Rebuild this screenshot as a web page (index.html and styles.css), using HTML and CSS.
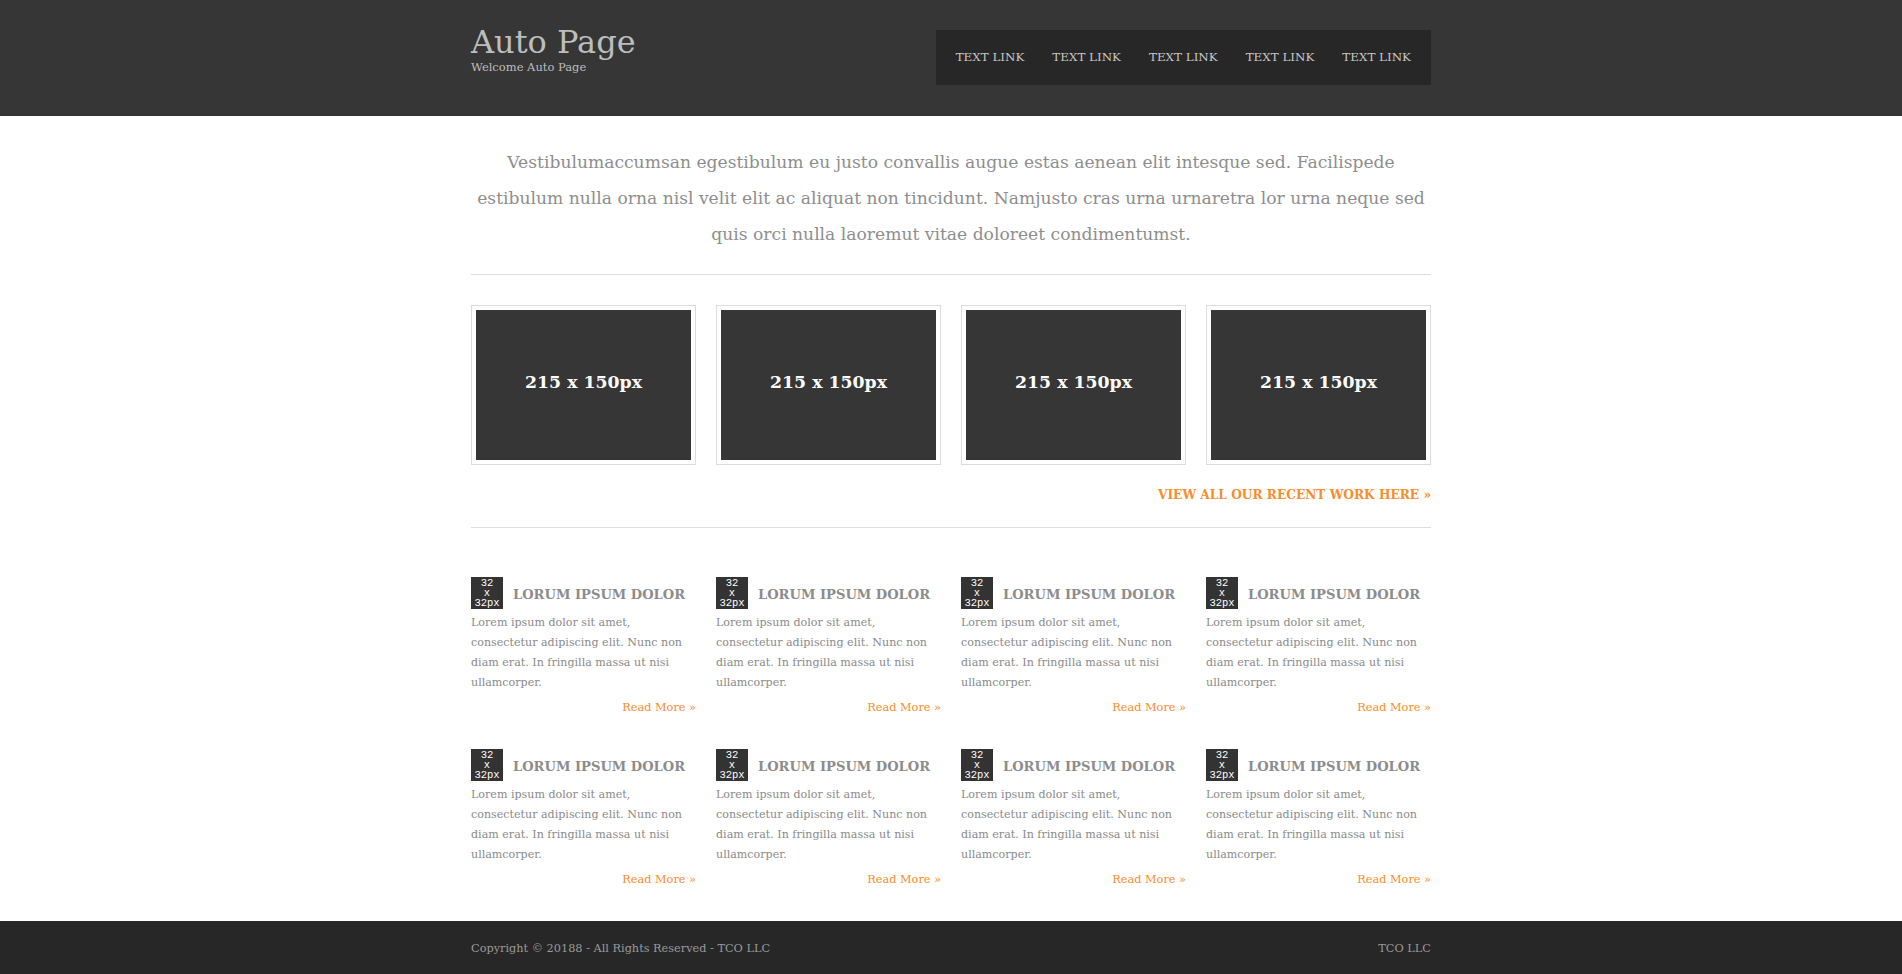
FILE: index.html
```html
<!DOCTYPE html>
<html lang="en">
<head>
<meta charset="utf-8">
<title>Auto Page</title>
<link rel="stylesheet" href="styles.css">
</head>
<body>
<header class="site-header">
  <div class="wrap header-inner">
    <div class="brand">
      <h1 class="brand-title">Auto Page</h1>
      <p class="brand-sub">Welcome Auto Page</p>
    </div>
    <nav class="nav">
      <a href="#">TEXT LINK</a>
      <a href="#">TEXT LINK</a>
      <a href="#">TEXT LINK</a>
      <a href="#">TEXT LINK</a>
      <a href="#">TEXT LINK</a>
    </nav>
  </div>
</header>

<main class="wrap main">
  <p class="intro">Vestibulumaccumsan egestibulum eu justo convallis augue estas aenean elit intesque sed. Facilispede estibulum nulla orna nisl velit elit ac aliquat non tincidunt. Namjusto cras urna urnaretra lor urna neque sed quis orci nulla laoremut vitae doloreet condimentumst.</p>
  <hr class="rule">

  <section class="works">
    <div class="work"><div class="work-img">215 x 150px</div></div>
    <div class="work"><div class="work-img">215 x 150px</div></div>
    <div class="work"><div class="work-img">215 x 150px</div></div>
    <div class="work"><div class="work-img">215 x 150px</div></div>
  </section>
  <div class="view-all"><a href="#">VIEW ALL OUR RECENT WORK HERE &raquo;</a></div>
  <hr class="rule">

  <section class="features">
    <article class="feature">
      <div class="feature-head"><span class="icon">32<br>x<br>32px</span><h3>LORUM IPSUM DOLOR</h3></div>
      <p>Lorem ipsum dolor sit amet, consectetur adipiscing elit. Nunc non diam erat. In fringilla massa ut nisi ullamcorper.</p>
      <a class="more" href="#">Read More &raquo;</a>
    </article>
    <article class="feature">
      <div class="feature-head"><span class="icon">32<br>x<br>32px</span><h3>LORUM IPSUM DOLOR</h3></div>
      <p>Lorem ipsum dolor sit amet, consectetur adipiscing elit. Nunc non diam erat. In fringilla massa ut nisi ullamcorper.</p>
      <a class="more" href="#">Read More &raquo;</a>
    </article>
    <article class="feature">
      <div class="feature-head"><span class="icon">32<br>x<br>32px</span><h3>LORUM IPSUM DOLOR</h3></div>
      <p>Lorem ipsum dolor sit amet, consectetur adipiscing elit. Nunc non diam erat. In fringilla massa ut nisi ullamcorper.</p>
      <a class="more" href="#">Read More &raquo;</a>
    </article>
    <article class="feature">
      <div class="feature-head"><span class="icon">32<br>x<br>32px</span><h3>LORUM IPSUM DOLOR</h3></div>
      <p>Lorem ipsum dolor sit amet, consectetur adipiscing elit. Nunc non diam erat. In fringilla massa ut nisi ullamcorper.</p>
      <a class="more" href="#">Read More &raquo;</a>
    </article>
    <article class="feature">
      <div class="feature-head"><span class="icon">32<br>x<br>32px</span><h3>LORUM IPSUM DOLOR</h3></div>
      <p>Lorem ipsum dolor sit amet, consectetur adipiscing elit. Nunc non diam erat. In fringilla massa ut nisi ullamcorper.</p>
      <a class="more" href="#">Read More &raquo;</a>
    </article>
    <article class="feature">
      <div class="feature-head"><span class="icon">32<br>x<br>32px</span><h3>LORUM IPSUM DOLOR</h3></div>
      <p>Lorem ipsum dolor sit amet, consectetur adipiscing elit. Nunc non diam erat. In fringilla massa ut nisi ullamcorper.</p>
      <a class="more" href="#">Read More &raquo;</a>
    </article>
    <article class="feature">
      <div class="feature-head"><span class="icon">32<br>x<br>32px</span><h3>LORUM IPSUM DOLOR</h3></div>
      <p>Lorem ipsum dolor sit amet, consectetur adipiscing elit. Nunc non diam erat. In fringilla massa ut nisi ullamcorper.</p>
      <a class="more" href="#">Read More &raquo;</a>
    </article>
    <article class="feature">
      <div class="feature-head"><span class="icon">32<br>x<br>32px</span><h3>LORUM IPSUM DOLOR</h3></div>
      <p>Lorem ipsum dolor sit amet, consectetur adipiscing elit. Nunc non diam erat. In fringilla massa ut nisi ullamcorper.</p>
      <a class="more" href="#">Read More &raquo;</a>
    </article>
  </section>
</main>

<footer class="site-footer">
  <div class="wrap footer-inner">
    <span>Copyright &copy; 20188 - All Rights Reserved - TCO LLC</span>
    <span>TCO LLC</span>
  </div>
</footer>
</body>
</html>
```

FILE: styles.css
```css
* { box-sizing: border-box; }
html, body { margin: 0; padding: 0; }
body {
  background: #fff;
  font-family: "DejaVu Serif", "Liberation Serif", serif;
  color: #8a8a8a;
}
a { text-decoration: none; }
.wrap { width: 960px; margin: 0 auto; }

/* header */
.site-header { background: #363636; height: 116px; }
.header-inner { display: flex; justify-content: space-between; align-items: flex-start; }
.brand { padding-top: 25px; }
.brand-title {
  margin: 0; font-weight: normal; font-size: 32px; line-height: 34px;
  color: #bdbdbd;
}
.brand-sub { margin: 0; font-size: 11.5px; line-height: 17px; color: #bdbdbd; }
.nav {
  margin-top: 30px; height: 55px; background: #272727;
  display: flex; align-items: center; padding: 0 6px;
}
.nav a { color: #c8c8c8; font-size: 11.9px; padding: 0 14px; line-height: 55px; }

/* main */
.main { padding-top: 28px; }
.intro {
  margin: 0; text-align: center; font-size: 17.15px; line-height: 36px; color: #8e8e8e;
}
.rule { border: 0; border-top: 1px solid #dedede; margin: 22px 0 0; height: 0; }

.works { display: grid; grid-template-columns: repeat(4, 225px); column-gap: 20px; margin-top: 30px; }
.work { border: 1px solid #dcdcdc; padding: 4px; }
.work-img {
  height: 150px; background: #363636; color: #fff;
  display: flex; align-items: center; justify-content: center;
  font-weight: bold; font-size: 17.3px; padding-bottom: 6px;
}
.view-all { text-align: right; margin-top: 19px; line-height: 20px; }
.view-all a { color: #f98d2b; font-weight: bold; font-size: 12.2px; }

.features {
  display: grid; grid-template-columns: repeat(4, 225px); column-gap: 20px; row-gap: 31px;
  margin-top: 49px; padding-bottom: 31px;
}
.feature { display: flex; flex-direction: column; }
.feature-head { display: flex; align-items: center; height: 32px; }
.icon {
  width: 32px; height: 32px; flex: none; background: #333; color: #fff;
  font-family: "Liberation Mono", "DejaVu Sans Mono", monospace; font-size: 10.5px; line-height: 10px;
  text-align: center; padding-top: 1px; margin-right: 10px;
}
.feature-head h3 { margin: 0; padding-top: 3px; font-size: 13.1px; font-weight: bold; color: #8c8c8c; white-space: nowrap; }
.feature p { margin: 4px 0 0; font-size: 11.1px; line-height: 20px; color: #8a8a8a; }
.more { align-self: flex-end; color: #f98d2b; font-size: 11.3px; line-height: 20px; margin-top: 5px; }

/* footer */
.site-footer { background: #272727; height: 54px; }
.footer-inner { display: flex; justify-content: space-between; align-items: center; height: 54px; }
.footer-inner span { font-size: 11.3px; color: #9a9a9a; }
```
